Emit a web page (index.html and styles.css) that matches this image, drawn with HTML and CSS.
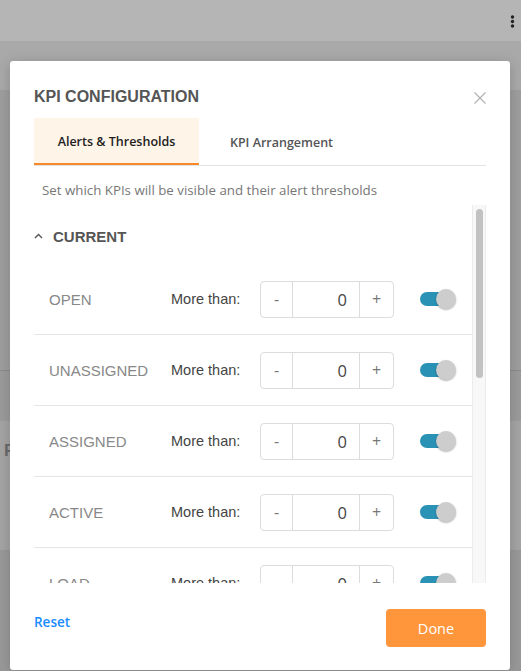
FILE: index.html
```html
<!DOCTYPE html>
<html>
<head>
<meta charset="utf-8">
<link rel="stylesheet" href="styles.css">
</head>
<body>
<div class="page">
  <div class="topbar">
    <svg class="more" width="5" height="13" viewBox="0 0 5 13"><circle cx="2.5" cy="2" r="1.7"/><circle cx="2.5" cy="6.5" r="1.7"/><circle cx="2.5" cy="11" r="1.7"/></svg>
  </div>
  <div class="band band1"></div>
  <div class="band band2"></div>
  <div class="band band3"></div>
  <div class="band card"><span class="card-title">F</span></div>
  <div class="band rest"></div>
</div>

<div class="modal">
  <div class="modal-head">
    <h1 class="modal-title">KPI CONFIGURATION</h1>
    <button class="close" aria-label="Close">
      <svg width="12" height="12" viewBox="0 0 12 12"><path d="M0.5 0.5 L11.5 11.5 M11.5 0.5 L0.5 11.5" stroke="#b0b0b0" stroke-width="1.1" fill="none"/></svg>
    </button>
  </div>
  <div class="tabs">
    <div class="tab active">Alerts &amp; Thresholds</div>
    <div class="tab">KPI Arrangement</div>
  </div>
  <p class="desc">Set which KPIs will be visible and their alert thresholds</p>
  <div class="list">
    <div class="list-body">
      <div class="section-head">
        <svg class="chev" width="9" height="6" viewBox="0 0 9 6"><path d="M1 5 L4.5 1.5 L8 5" stroke="#555" stroke-width="1.4" fill="none"/></svg>
        <span>CURRENT</span>
      </div>
      <div class="kpi-row">
        <span class="kpi-name">OPEN</span>
        <span class="kpi-cond">More than:</span>
        <div class="stepper"><span class="step">-</span><span class="val">0</span><span class="step">+</span></div>
        <span class="toggle"><span class="knob"></span></span>
      </div>
      <div class="kpi-row">
        <span class="kpi-name">UNASSIGNED</span>
        <span class="kpi-cond">More than:</span>
        <div class="stepper"><span class="step">-</span><span class="val">0</span><span class="step">+</span></div>
        <span class="toggle"><span class="knob"></span></span>
      </div>
      <div class="kpi-row">
        <span class="kpi-name">ASSIGNED</span>
        <span class="kpi-cond">More than:</span>
        <div class="stepper"><span class="step">-</span><span class="val">0</span><span class="step">+</span></div>
        <span class="toggle"><span class="knob"></span></span>
      </div>
      <div class="kpi-row">
        <span class="kpi-name">ACTIVE</span>
        <span class="kpi-cond">More than:</span>
        <div class="stepper"><span class="step">-</span><span class="val">0</span><span class="step">+</span></div>
        <span class="toggle"><span class="knob"></span></span>
      </div>
      <div class="kpi-row">
        <span class="kpi-name">LOAD</span>
        <span class="kpi-cond">More than:</span>
        <div class="stepper"><span class="step">-</span><span class="val">0</span><span class="step">+</span></div>
        <span class="toggle"><span class="knob"></span></span>
      </div>
    </div>
    <div class="scrollbar"><div class="thumb"></div></div>
  </div>
  <div class="modal-foot">
    <a class="reset" href="#">Reset</a>
    <button class="done">Done</button>
  </div>
</div>
</body>
</html>
```

FILE: styles.css
```css
html, body {
  margin: 0;
  padding: 0;
}
body {
  width: 521px;
  height: 671px;
  overflow: hidden;
  background: #9a9a9a;
  font-family: "Liberation Sans", Arial, sans-serif;
}

/* dimmed page behind the dialog */
.page {
  display: flex;
  flex-direction: column;
  height: 671px;
}
.topbar {
  height: 41px;
  flex: none;
  background: #b5b5b5;
  display: flex;
  justify-content: flex-end;
  align-items: center;
  padding-right: 6px;
}
.more { fill: #222; margin-top: 1px; }
.band { flex: none; }
.band1 { height: 49px; background: #a9a9a9; }
.band2 { height: 280px; background: #9e9e9e; border-bottom: 1px solid #8b8b8b; }
.band3 { height: 50px; background: #9b9b9b; }
.card {
  height: 129px;
  background: #a4a4a4;
  padding: 20px 0 0 4px;
  box-sizing: border-box;
}
.card-title { font-weight: bold; font-size: 17px; color: #6a6a6a; }
.rest { flex: 1; background: #999; }

/* dialog */
.modal {
  position: absolute;
  top: 61px;
  left: 10px;
  width: 500px;
  height: 609px;
  background: #fff;
  border-radius: 3px;
  box-shadow: 0 2px 14px rgba(0,0,0,0.18);
  display: flex;
  flex-direction: column;
  padding: 27px 24px 0 24px;
  box-sizing: border-box;
}
.modal-head {
  display: flex;
  justify-content: space-between;
  align-items: center;
  height: 18px;
}
.modal-title {
  margin: 0;
  font-size: 16px;
  line-height: 18px;
  font-weight: bold;
  color: #555;
}
.close {
  border: 0;
  background: none;
  padding: 0;
  width: 12px;
  height: 12px;
  display: block;
  margin-top: 2px;
}
.close svg { display: block; }

.tabs {
  margin-top: 12px;
  display: flex;
  border-bottom: 1px solid #e2e2e2;
}
.tab {
  width: 165px;
  height: 47px;
  box-sizing: border-box;
  display: flex;
  align-items: center;
  justify-content: center;
  font-family: "Open Sans", sans-serif;
  font-size: 12.5px;
  font-weight: 600;
  color: #555;
  padding-top: 1px;
}
.tab.active {
  background: #fff4e8;
  border-bottom: 2px solid #f7892a;
  color: #222;
  padding-top: 2px;
}

.desc {
  margin: 15px 0 6px 8px;
  font-family: "Open Sans", sans-serif;
  font-size: 13.3px;
  line-height: 18px;
  color: #777;
}

.list {
  height: 378px;
  flex: none;
  display: flex;
}
.list-body {
  flex: 1;
  overflow: hidden;
}
.scrollbar {
  width: 14px;
  flex: none;
  box-sizing: border-box;
  background: #f8f8f8;
  border-left: 1px solid #ececec;
  border-right: 1px solid #ececec;
  padding: 4px 2px 0 3px;
}
.thumb {
  height: 169px;
  background: #c2c2c2;
  border-radius: 4px;
}

.section-head {
  height: 59px;
  box-sizing: border-box;
  padding-top: 23px;
  display: flex;
  align-items: flex-start;
  font-size: 15px;
  line-height: 18px;
  font-weight: bold;
  color: #555;
}
.chev { margin: 5px 10px 0 0; }

.kpi-row {
  height: 71px;
  box-sizing: border-box;
  border-bottom: 1px solid #e6e6e6;
  display: flex;
  align-items: center;
  padding-left: 15px;
}
.kpi-name {
  width: 122px;
  flex: none;
  font-size: 15px;
  color: #888;
}
.kpi-cond {
  width: 89px;
  flex: none;
  font-size: 14.5px;
  color: #444;
}
.stepper {
  width: 134px;
  height: 37px;
  box-sizing: border-box;
  border: 1px solid #dcdcdc;
  border-radius: 4px;
  display: flex;
  font-family: "Open Sans", sans-serif;
  flex: none;
}
.step {
  width: 31px;
  display: flex;
  align-items: center;
  justify-content: center;
  font-size: 16px;
  color: #777;
}
.step:last-child { width: 33px; }
.val {
  flex: 1;
  border-left: 1px solid #dcdcdc;
  border-right: 1px solid #dcdcdc;
  display: flex;
  align-items: center;
  justify-content: flex-end;
  padding-right: 12px;
  font-size: 16.5px;
  color: #444;
}

.toggle {
  position: relative;
  width: 36px;
  height: 20px;
  margin-left: 26px;
  flex: none;
}
.toggle::before {
  content: "";
  position: absolute;
  left: 0;
  top: 3px;
  width: 32px;
  height: 14px;
  border-radius: 7px;
  background: #2a92b5;
}
.knob {
  position: absolute;
  right: 0;
  top: 0;
  width: 20px;
  height: 20px;
  border-radius: 50%;
  background: #cdcdcd;
  box-shadow: 0 1px 2px rgba(0,0,0,0.3);
}

.modal-foot {
  flex: 1;
  display: flex;
  justify-content: space-between;
  align-items: flex-start;
  padding-top: 26px;
}
.reset {
  margin-top: 3px;
  font-family: "Open Sans", sans-serif;
  font-size: 13.5px;
  line-height: 20px;
  font-weight: 600;
  color: #1a8cff;
  text-decoration: none;
}
.done {
  width: 100px;
  height: 38px;
  border: 0;
  border-radius: 4px;
  background: #ff963b;
  color: #fff;
  font-family: "Open Sans", sans-serif;
  font-size: 14.5px;
  padding: 0;
}
```
